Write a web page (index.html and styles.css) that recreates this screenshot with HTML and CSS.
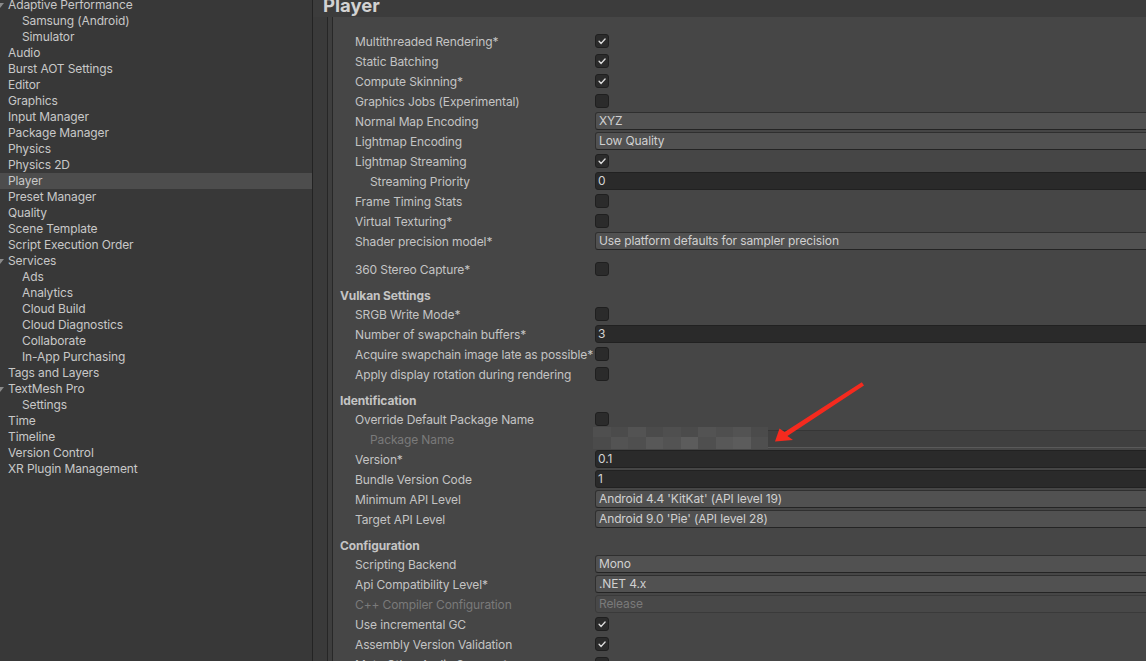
FILE: index.html
```html
<!DOCTYPE html>
<html lang="en">
<head>
<meta charset="utf-8">
<title>Project Settings - Player</title>
<link rel="stylesheet" href="styles.css">
</head>
<body>
<div class="window">
  <aside class="sidebar">
    <ul class="tree">
      <li class="item open">Adaptive Performance</li>
      <li class="item child">Samsung (Android)</li>
      <li class="item child">Simulator</li>
      <li class="item">Audio</li>
      <li class="item">Burst AOT Settings</li>
      <li class="item">Editor</li>
      <li class="item">Graphics</li>
      <li class="item">Input Manager</li>
      <li class="item">Package Manager</li>
      <li class="item">Physics</li>
      <li class="item">Physics 2D</li>
      <li class="item selected">Player</li>
      <li class="item">Preset Manager</li>
      <li class="item">Quality</li>
      <li class="item">Scene Template</li>
      <li class="item">Script Execution Order</li>
      <li class="item open">Services</li>
      <li class="item child">Ads</li>
      <li class="item child">Analytics</li>
      <li class="item child">Cloud Build</li>
      <li class="item child">Cloud Diagnostics</li>
      <li class="item child">Collaborate</li>
      <li class="item child">In-App Purchasing</li>
      <li class="item">Tags and Layers</li>
      <li class="item open">TextMesh Pro</li>
      <li class="item child">Settings</li>
      <li class="item">Time</li>
      <li class="item">Timeline</li>
      <li class="item">Version Control</li>
      <li class="item">XR Plugin Management</li>
    </ul>
  </aside>

  <main class="main">
    <div class="titlebar"><h1 class="title">Player</h1></div>
    <div class="body">
      <div class="gutter"></div>
      <div class="groove"></div>
      <div class="content">

        <div class="row"><span class="label">Multithreaded Rendering*</span><span class="checkbox"><svg viewBox="0 0 14 14"><path d="M3.6 7.4 L6 9.8 L10.6 4.6"/></svg></span></div>
        <div class="row"><span class="label">Static Batching</span><span class="checkbox"><svg viewBox="0 0 14 14"><path d="M3.6 7.4 L6 9.8 L10.6 4.6"/></svg></span></div>
        <div class="row"><span class="label">Compute Skinning*</span><span class="checkbox"><svg viewBox="0 0 14 14"><path d="M3.6 7.4 L6 9.8 L10.6 4.6"/></svg></span></div>
        <div class="row"><span class="label">Graphics Jobs (Experimental)</span><span class="checkbox"></span></div>
        <div class="row"><span class="label">Normal Map Encoding</span><span class="dropdown">XYZ</span></div>
        <div class="row"><span class="label">Lightmap Encoding</span><span class="dropdown">Low Quality</span></div>
        <div class="row"><span class="label">Lightmap Streaming</span><span class="checkbox"><svg viewBox="0 0 14 14"><path d="M3.6 7.4 L6 9.8 L10.6 4.6"/></svg></span></div>
        <div class="row"><span class="label indent">Streaming Priority</span><span class="textfield">0</span></div>
        <div class="row"><span class="label">Frame Timing Stats</span><span class="checkbox"></span></div>
        <div class="row"><span class="label">Virtual Texturing*</span><span class="checkbox"></span></div>
        <div class="row spaced"><span class="label">Shader precision model*</span><span class="dropdown">Use platform defaults for sampler precision</span></div>
        <div class="row"><span class="label">360 Stereo Capture*</span><span class="checkbox"></span></div>

        <div class="header">Vulkan Settings</div>
        <div class="row"><span class="label">SRGB Write Mode*</span><span class="checkbox"></span></div>
        <div class="row"><span class="label">Number of swapchain buffers*</span><span class="textfield">3</span></div>
        <div class="row"><span class="label">Acquire swapchain image late as possible*</span><span class="checkbox"></span></div>
        <div class="row"><span class="label">Apply display rotation during rendering</span><span class="checkbox"></span></div>

        <div class="header">Identification</div>
        <div class="row"><span class="label">Override Default Package Name</span><span class="checkbox"></span></div>
        <div class="row"><span class="label indent disabled">Package Name</span>
          <span class="textfield locked">
            <span class="mosaic">
              <i class="m2"></i><i class="m1"></i><i class="m3"></i><i class="m1"></i><i class="m2"></i><i class="m1"></i><i class="m3"></i><i class="m2"></i><i class="m3"></i><i class="m1"></i>
              <i class="m1"></i><i class="m3"></i><i class="m2"></i><i class="m4"></i><i class="m3"></i><i class="m5"></i><i class="m2"></i><i class="m4"></i><i class="m5"></i><i class="m2"></i>
            </span>
          </span>
        </div>
        <div class="row"><span class="label">Version*</span><span class="textfield">0.1</span></div>
        <div class="row"><span class="label">Bundle Version Code</span><span class="textfield">1</span></div>
        <div class="row"><span class="label">Minimum API Level</span><span class="dropdown">Android 4.4 'KitKat' (API level 19)</span></div>
        <div class="row"><span class="label">Target API Level</span><span class="dropdown">Android 9.0 'Pie' (API level 28)</span></div>

        <div class="header">Configuration</div>
        <div class="row"><span class="label">Scripting Backend</span><span class="dropdown">Mono</span></div>
        <div class="row"><span class="label">Api Compatibility Level*</span><span class="dropdown">.NET 4.x</span></div>
        <div class="row"><span class="label disabled">C++ Compiler Configuration</span><span class="dropdown inactive">Release</span></div>
        <div class="row"><span class="label">Use incremental GC</span><span class="checkbox"><svg viewBox="0 0 14 14"><path d="M3.6 7.4 L6 9.8 L10.6 4.6"/></svg></span></div>
        <div class="row"><span class="label">Assembly Version Validation</span><span class="checkbox"><svg viewBox="0 0 14 14"><path d="M3.6 7.4 L6 9.8 L10.6 4.6"/></svg></span></div>
        <div class="row"><span class="label">Mute Other Audio Sources*</span><span class="checkbox"></span></div>
      </div>
    </div>
  </main>
</div>

<svg class="annotation" viewBox="0 0 1146 661" width="1146" height="661">
  <polygon points="861.8,382.2 784.6,431.9 779.5,428.5 775,441.5 793,440 787.4,436.1 864,385.6"/>
</svg>
</body>
</html>
```

FILE: styles.css
```css
* {
  box-sizing: border-box;
  margin: 0;
  padding: 0;
}

html,
body {
  width: 1146px;
  height: 661px;
  overflow: hidden;
}

body {
  position: relative;
  background: #383838;
  font-family: Inter, "Noto Sans", sans-serif;
  font-size: 12px;
  letter-spacing: -0.12px;
  color: #c4c4c4;
}

.window {
  display: flex;
  height: 661px;
}

/* ---------- left tree ---------- */
.sidebar {
  width: 313px;
  flex: none;
  background: #383838;
  border-right: 1px solid #232323;
  overflow: hidden;
}

.tree {
  list-style: none;
  margin-top: -3px;
}

.item {
  position: relative;
  height: 16px;
  line-height: 16px;
  padding-left: 8px;
  white-space: nowrap;
  color: #c8c8c8;
}

.item.child {
  padding-left: 22px;
}

.item.selected {
  background: #4d4d4d;
}

.item.open::before {
  content: "";
  position: absolute;
  left: -4px;
  top: 6px;
  border-left: 4px solid transparent;
  border-right: 4px solid transparent;
  border-top: 5px solid #8a8a8a;
}

/* ---------- right panel ---------- */
.main {
  flex: 1;
  min-width: 0;
  display: flex;
  flex-direction: column;
  overflow: hidden;
}

.titlebar {
  height: 17px;
  flex: none;
  background: #3c3c3c;
  padding-left: 10px;
}

.title {
  font-size: 18.5px;
  font-weight: 700;
  line-height: 11px;
  letter-spacing: 0;
  color: #d2d2d2;
}

.body {
  flex: 1;
  min-height: 0;
  display: flex;
}

.gutter {
  width: 15px;
  flex: none;
  background: #3a3a3a;
  border-right: 1px solid #262626;
}

.groove {
  width: 5px;
  flex: none;
  background: #3e3e3e;
  border-right: 1px solid #282828;
}

.content {
  flex: 1;
  background: #464646;
  padding-top: 14px;
  margin-right: -40px;
}

.row {
  display: grid;
  grid-template-columns: 262px 1fr;
  align-items: center;
  height: 20px;
}

.row.spaced {
  margin-bottom: 8px;
}

.label {
  padding-left: 22px;
  padding-top: 2px;
  line-height: 18px;
  white-space: nowrap;
  overflow: visible;
  color: #c4c4c4;
}

.label.indent {
  padding-left: 37px;
}

.label.disabled {
  color: #7a7a7a;
}

.header {
  height: 25px;
  padding: 8px 0 0 7px;
  line-height: 17px;
  font-weight: 700;
  color: #c4c4c4;
}

/* ---------- controls ---------- */
.checkbox {
  width: 14px;
  height: 14px;
  background: #2b2b2b;
  border: 1px solid #1f1f1f;
  border-radius: 3px;
  display: flex;
}

.checkbox svg {
  width: 12px;
  height: 12px;
  fill: none;
  stroke: #dcdcdc;
  stroke-width: 1.6;
  stroke-linecap: round;
  stroke-linejoin: round;
}

.dropdown {
  height: 18px;
  background: #515151;
  border: 1px solid #2f2f2f;
  border-bottom-color: #242424;
  border-radius: 3px;
  padding-left: 3px;
  line-height: 16px;
  white-space: nowrap;
  color: #d0d0d0;
}

.dropdown.inactive {
  background: #484848;
  border-color: #3a3a3a;
  color: #7a7a7a;
}

.textfield {
  height: 18px;
  background: #2a2a2a;
  border: 1px solid #212121;
  border-radius: 3px;
  padding-left: 2px;
  line-height: 16px;
  white-space: nowrap;
  color: #d2d2d2;
}

.textfield.locked {
  display: flex;
  align-items: center;
  background: #404040;
  border-color: #363636;
  border-bottom-color: #5a5a5a;
  padding-left: 0;
  overflow: visible;
}

.mosaic {
  display: grid;
  grid-template-columns: repeat(10, 17.5px);
  grid-template-rows: 10px 12px;
  margin-left: -3px;
  margin-top: -2px;
}

.mosaic i {
  display: block;
}

.m0 { background: #454545; }
.m1 { background: #4b4b4b; }
.m2 { background: #4f4f4f; }
.m3 { background: #535353; }
.m4 { background: #585858; }
.m5 { background: #5c5c5c; }

/* ---------- annotation overlay ---------- */
.annotation {
  position: absolute;
  left: 0;
  top: 0;
  pointer-events: none;
}

.annotation polygon {
  fill: #f52a1e;
}
```
